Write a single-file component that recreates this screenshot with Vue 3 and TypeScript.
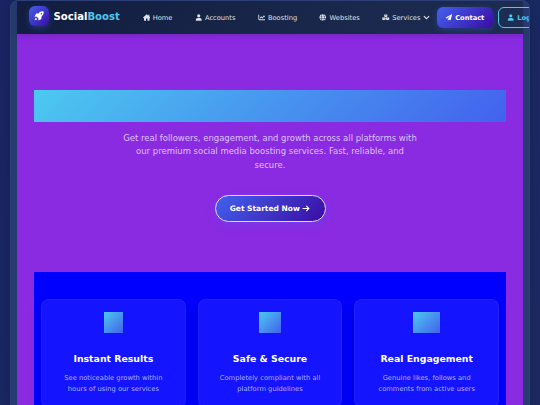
<script setup lang="ts">
interface NavLink {
  label: string
  icon: string
  viewBox: string
  dropdown?: boolean
}

interface Feature {
  title: string
  lines: string[]
  iconWidth: number
}

const userIcon = 'M224 256a120 120 0 1 0 0-240 120 120 0 1 0 0 240zM8 504v-64c0-75 55-136 130-136h172c75 0 130 61 130 136v64z'

const links: NavLink[] = [
  {
    label: 'Home',
    viewBox: '0 0 576 512',
    icon: 'M288 8 0 264l40 50 36-30v188c0 20 10 32 32 32h124V350h112v154h124c22 0 32-12 32-32V284l36 30 40-50-88-78V54h-74v66z',
  },
  { label: 'Accounts', viewBox: '0 0 448 512', icon: userIcon },
  {
    label: 'Boosting',
    viewBox: '0 0 512 512',
    icon: 'M0 48h64v336c0 10 6 16 16 16h432v64H72c-42 0-72-30-72-72zM112 286l100-112 92 76 80-82-44-44h140v140l-48-48-126 128-90-76-56 64z',
  },
  {
    label: 'Websites',
    viewBox: '0 0 512 512',
    icon: 'M166 144h180C330 62 299 16 256 16s-74 46-90 128zM134 144C144 94 160 54 184 27 114 46 58 86 32 144zM378 144h102C454 86 398 46 328 27c24 27 40 67 50 117zM20 176h109a600 600 0 0 0 0 160H20a240 240 0 0 1 0-160zM161 176h190a600 600 0 0 1 0 160H161a600 600 0 0 1 0-160zM383 176h109a240 240 0 0 1 0 160H383a600 600 0 0 0 0-160zM166 368h180c-16 82-47 128-90 128s-74-46-90-128zM134 368H32c26 58 82 98 152 117-24-27-40-67-50-117zM378 368h102c-26 58-82 98-152 117 24-27 40-67 50-117z',
  },
  {
    label: 'Services',
    viewBox: '0 0 576 512',
    dropdown: true,
    icon: 'M288 8 164 56v136l124 54 124-54V56zm0 40 68 26-68 28-68-28zM140 228 16 278v140l124 62 136-62V278zm4 42 72 28-72 30-76-30zM436 228l-136 50v140l136 62 124-62V278zm-4 42 76 28-76 30-72-30z',
  },
]

const features: Feature[] = [
  { title: 'Instant Results', lines: ['See noticeable growth within', 'hours of using our services'], iconWidth: 19 },
  { title: 'Safe & Secure', lines: ['Completely compliant with all', 'platform guidelines'], iconWidth: 21.5 },
  { title: 'Real Engagement', lines: ['Genuine likes, follows and', 'comments from active users'], iconWidth: 26.5 },
]
</script>

<template>
  <div class="page">
    <div class="shell">
      <header class="navbar">
        <a class="brand">
          <span class="brand-icon">
            <svg viewBox="0 0 512 512">
              <path d="M490 22C382 2 292 46 224 132h-98c-14 0-24 8-30 18L24 288h112l88 88v112l138-72c10-6 18-16 18-30v-98c86-68 130-158 110-266zM376 178a38 38 0 1 1 0-76 38 38 0 0 1 0 76zM98 344c-38 20-58 68-62 132 64-4 112-24 132-62z" fill-rule="evenodd" />
            </svg>
          </span>
          <span class="brand-name">Social<span class="accent">Boost</span></span>
        </a>

        <nav class="links">
          <a v-for="link in links" :key="link.label" class="link">
            <svg class="icon" :viewBox="link.viewBox"><path :d="link.icon" /></svg>
            <span>{{ link.label }}</span>
            <svg v-if="link.dropdown" class="chevron" viewBox="0 0 12 8">
              <path d="M1.500 1.500 6 6l4.500-4.500" />
            </svg>
          </a>
        </nav>

        <a class="btn contact">
          <svg class="icon" viewBox="0 0 512 512">
            <path d="M508 4 4 284l126 64L400 120 190 376v130l80-94 130 54z" />
          </svg>
          <span>Contact</span>
        </a>
        <a class="btn login">
          <svg class="icon" viewBox="0 0 448 512"><path :d="userIcon" /></svg>
          <span>Login</span>
        </a>
      </header>

      <main class="content">
        <section class="hero">
          <h1 class="hero-title"></h1>
          <p class="hero-text">
            Get real followers, engagement, and growth across all platforms with our premium
            social media boosting services. Fast, reliable, and secure.
          </p>
          <a class="cta">
            <span>Get Started Now</span>
            <svg viewBox="0 0 14 12"><path d="M1 6h11M7.500 1.500 12 6l-4.500 4.500" /></svg>
          </a>
        </section>

        <section class="features">
          <article v-for="feature in features" :key="feature.title" class="card">
            <div class="card-icon" :style="{ width: feature.iconWidth + 'px' }"></div>
            <h3>{{ feature.title }}</h3>
            <p><span v-for="line in feature.lines" :key="line">{{ line }}</span></p>
          </article>
        </section>
      </main>
    </div>
  </div>
</template>

<style>
body {
  margin: 0;
  overflow: hidden;
}
</style>

<style scoped>
.page {
  box-sizing: border-box;
  width: 540px;
  height: 405px;
  padding: 0 10px;
  overflow: hidden;
  background: linear-gradient(135deg, #1a2466 0%, #182962 50%, #1d2a63 100%);
  font-family: "DejaVu Sans", sans-serif;
  color: #fff;
}

.shell {
  box-sizing: border-box;
  height: 440px;
  padding: 0 6px;
  overflow: hidden;
  border: 1px solid #2d3f76;
  border-radius: 8px;
  background: #273b70;
  box-shadow: 0 4px 14px rgba(0, 0, 0, 0.2);
}

.navbar {
  position: relative;
  box-sizing: border-box;
  display: flex;
  align-items: center;
  height: 33px;
  padding-left: 12px;
  background: linear-gradient(135deg, #121d3f, #1d2e52);
  box-shadow: 0 2px 6px rgba(0, 0, 0, 0.15);
}

.navbar > * {
  flex: none;
}

.brand {
  display: flex;
  align-items: center;
  width: 113.500px;
  height: 33px;
}

.brand-icon {
  display: flex;
  align-items: center;
  justify-content: center;
  width: 20px;
  height: 20px;
  margin: -3px 4.500px 0 0;
  border-radius: 6px;
  background: linear-gradient(135deg, #4361ee, #3a0ca3);
  box-shadow: 0 2px 6px rgba(67, 97, 238, 0.35);
}

.brand-icon svg {
  width: 10px;
  height: 10px;
  fill: #fff;
}

.brand-name {
  margin-top: -3px;
  font-size: 10.100px;
  font-weight: 700;
}

.accent {
  color: #4cc9f0;
}

.links {
  display: flex;
  gap: 22.300px;
  width: 294px;
}

.link {
  display: flex;
  align-items: center;
  font-size: 6.700px;
  color: #dfe2ea;
  white-space: nowrap;
}

.icon {
  width: 7.500px;
  height: 6.800px;
  margin-right: 2.700px;
  fill: currentColor;
}

.chevron {
  width: 7px;
  height: 5px;
  margin-left: 3px;
  fill: none;
  stroke: currentColor;
  stroke-width: 1.800;
}

.btn {
  box-sizing: border-box;
  display: flex;
  align-items: center;
  height: 20.500px;
  border-radius: 6px;
  font-size: 6.700px;
  font-weight: 700;
}

.contact {
  width: 56px;
  padding-left: 8.500px;
  background: linear-gradient(135deg, #4361ee, #3a0ca3);
  box-shadow: 0 2px 6px rgba(67, 97, 238, 0.3);
}

.login {
  width: 56px;
  margin-left: 5.500px;
  padding-left: 8px;
  border: 1px solid #4cc9f0;
  color: #4cc9f0;
}

.content {
  box-sizing: border-box;
  height: 406px;
  padding: 56px 17px 0;
  background: blueviolet;
}

.hero {
  display: flex;
  flex-direction: column;
  align-items: center;
  height: 182px;
}

.hero-title {
  width: 100%;
  height: 32.300px;
  margin: 0;
  background: linear-gradient(135deg, #4cc9f0, #4361ee);
}

.hero-text {
  width: 298px;
  margin: 9.500px 0 0;
  font-size: 8.480px;
  line-height: 13.500px;
  text-align: center;
  color: rgba(255, 255, 255, 0.72);
}

.cta {
  box-sizing: border-box;
  display: flex;
  align-items: center;
  justify-content: center;
  gap: 2.500px;
  width: 111px;
  height: 27px;
  margin-top: 23px;
  border: 1.500px solid #e4d4f7;
  border-radius: 14px;
  background: linear-gradient(135deg, #4361ee, #3a0ca3);
  box-shadow: 0 3px 9px rgba(67, 97, 238, 0.25);
  font-size: 7.500px;
  font-weight: 700;
}

.cta svg {
  width: 8px;
  height: 7px;
  fill: none;
  stroke: currentColor;
  stroke-width: 2;
}

.features {
  display: flex;
  gap: 12px;
  height: 140px;
  padding: 27px 7px 0;
  background: blue;
}

.card {
  box-sizing: border-box;
  display: flex;
  flex: 1;
  flex-direction: column;
  align-items: center;
  height: 109px;
  padding-top: 12px;
  border: 1px solid rgba(255, 255, 255, 0.06);
  border-radius: 8px;
  background: #1414ff;
  box-shadow: 0 4px 14px rgba(0, 0, 0, 0.13);
}

.card-icon {
  height: 21.300px;
  background: linear-gradient(135deg, #4cc9f0, #4361ee);
}

.card h3 {
  margin: 19.700px 0 0;
  font-size: 9.350px;
  line-height: 12px;
}

.card p {
  display: flex;
  flex-direction: column;
  margin: 8px 0 0;
  font-size: 6.750px;
  line-height: 11px;
  text-align: center;
  color: rgba(255, 255, 255, 0.65);
}
</style>
